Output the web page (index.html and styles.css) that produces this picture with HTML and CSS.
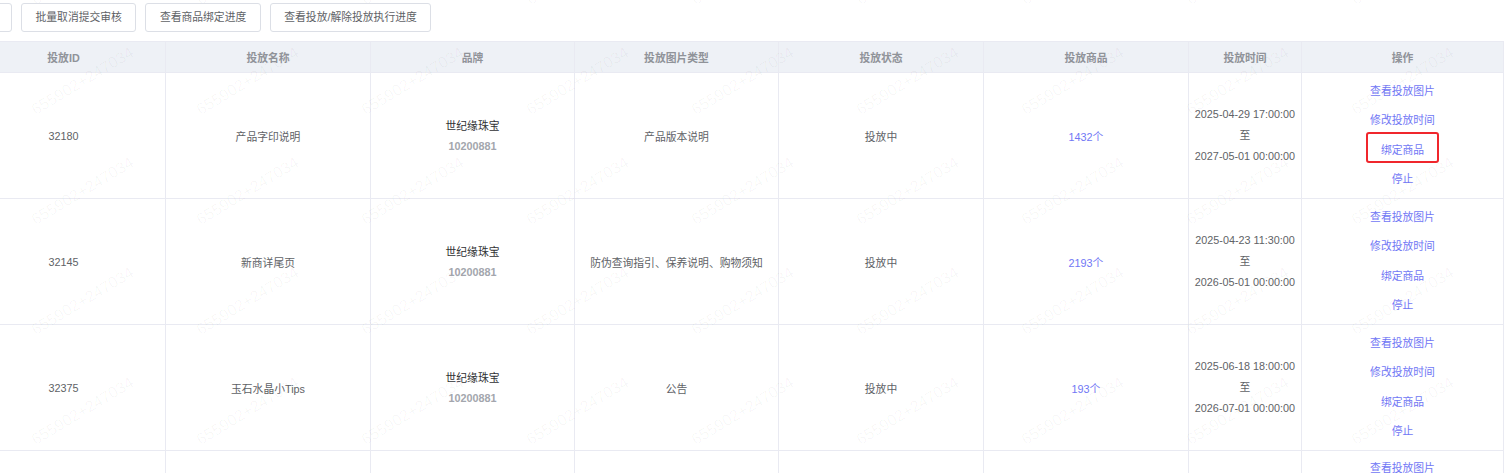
FILE: index.html
```html
<!DOCTYPE html>
<html lang="zh-CN">
<head>
  <meta charset="UTF-8">
  <meta name="viewport" content="width=device-width, initial-scale=1.0">
  <title>投放管理</title>
  <link rel="stylesheet" href="styles.css">
</head>
<body>
  <div class="page">
    <div class="toolbar">
      <button class="btn btn-cut" aria-label="批量提交审核"></button>
      <button class="btn">批量取消提交审核</button>
      <button class="btn">查看商品绑定进度</button>
      <button class="btn">查看投放/解除投放执行进度</button>
    </div>

    <table class="grid">
      <colgroup>
        <col class="col-md">
        <col class="col-lg">
        <col class="col-md">
        <col class="col-md">
        <col class="col-lg">
        <col class="col-lg">
        <col class="col-sm">
        <col class="col-ops">
      </colgroup>
      <thead>
        <tr>
          <th>投放ID</th>
          <th>投放名称</th>
          <th>品牌</th>
          <th>投放图片类型</th>
          <th>投放状态</th>
          <th>投放商品</th>
          <th>投放时间</th>
          <th>操作</th>
        </tr>
      </thead>
      <tbody>
        <tr>
          <td>32180</td>
          <td>产品字印说明</td>
          <td>
            <div class="brand-name">世纪缘珠宝</div>
            <div class="brand-code">10200881</div>
          </td>
          <td>产品版本说明</td>
          <td>投放中</td>
          <td><a class="link" href="#">1432个</a></td>
          <td class="period">
            <div>2025-04-29 17:00:00</div>
            <div>至</div>
            <div>2027-05-01 00:00:00</div>
          </td>
          <td class="ops">
            <a class="op" href="#">查看投放图片</a>
            <a class="op" href="#">修改投放时间</a>
            <a class="op" href="#"><span class="marked">绑定商品</span></a>
            <a class="op" href="#">停止</a>
          </td>
        </tr>
        <tr>
          <td>32145</td>
          <td>新商详尾页</td>
          <td>
            <div class="brand-name">世纪缘珠宝</div>
            <div class="brand-code">10200881</div>
          </td>
          <td>防伪查询指引、保养说明、购物须知</td>
          <td>投放中</td>
          <td><a class="link" href="#">2193个</a></td>
          <td class="period">
            <div>2025-04-23 11:30:00</div>
            <div>至</div>
            <div>2026-05-01 00:00:00</div>
          </td>
          <td class="ops">
            <a class="op" href="#">查看投放图片</a>
            <a class="op" href="#">修改投放时间</a>
            <a class="op" href="#">绑定商品</a>
            <a class="op" href="#">停止</a>
          </td>
        </tr>
        <tr>
          <td>32375</td>
          <td>玉石水晶小Tips</td>
          <td>
            <div class="brand-name">世纪缘珠宝</div>
            <div class="brand-code">10200881</div>
          </td>
          <td>公告</td>
          <td>投放中</td>
          <td><a class="link" href="#">193个</a></td>
          <td class="period">
            <div>2025-06-18 18:00:00</div>
            <div>至</div>
            <div>2026-07-01 00:00:00</div>
          </td>
          <td class="ops">
            <a class="op" href="#">查看投放图片</a>
            <a class="op" href="#">修改投放时间</a>
            <a class="op" href="#">绑定商品</a>
            <a class="op" href="#">停止</a>
          </td>
        </tr>
        <tr class="row-peek">
          <td></td>
          <td></td>
          <td></td>
          <td></td>
          <td></td>
          <td></td>
          <td></td>
          <td class="ops">
            <a class="op" href="#">查看投放图片</a>
          </td>
        </tr>
      </tbody>
    </table>

    <div class="watermark" id="watermark"></div>
  </div>

  <script>
    // tile the account watermark over the whole page
    const mark = document.getElementById('watermark');
    for (let i = 0; i < 54; i++) {
      const s = document.createElement('span');
      s.textContent = '655902+247034';
      mark.appendChild(s);
    }
  </script>
</body>
</html>
```

FILE: styles.css
```css
body {
  margin: 0;
  overflow: hidden;
  background: #fff;
  color: #606266;
  font-family: "Liberation Sans", "Noto Sans CJK SC", sans-serif;
  font-size: 10.8px;
}
.page {
  position: relative;
  height: 473px;
  overflow: hidden;
}

.toolbar {
  display: flex;
  gap: 9px;
  padding-top: 3px;
  margin-left: -82px;
  margin-bottom: 9px;
}
.btn {
  height: 29px;
  padding: 0 13.5px;
  border: 1px solid #dcdfe6;
  border-radius: 3px;
  background: #fff;
  color: #606266;
  font-family: inherit;
  font-size: inherit;
  line-height: 27px;
  white-space: nowrap;
  cursor: pointer;
}
.btn-cut {
  width: 94px;
}

.grid {
  table-layout: fixed;
  width: 1542px;
  margin-left: -39px;
  border-collapse: collapse;
}
.col-md { width: 204px; }
.col-lg { width: 205px; }
.col-sm { width: 113px; }
.col-ops { width: 202px; }

.grid th,
.grid td {
  border: 1px solid #e9eaf2;
  padding: 0;
  text-align: center;
  vertical-align: middle;
}
.grid th {
  height: 30px;
  background: #eef1f6;
  color: #909399;
  font-weight: bold;
}
.grid td {
  height: 125px;
}
.grid .row-peek td {
  vertical-align: top;
}
.row-peek .ops {
  padding-top: 3px;
}

.brand-name {
  color: #303133;
  line-height: 20px;
}
.brand-code {
  color: #a3a6ad;
  font-weight: bold;
  line-height: 20px;
}
.period {
  line-height: 21px;
}

.link,
.op {
  color: #7177f5;
  text-decoration: none;
}
.op {
  display: block;
  line-height: 29.3px;
}
.ops {
  padding-bottom: 2px;
}
.marked {
  position: relative;
}
.marked::after {
  content: "";
  position: absolute;
  left: -15px;
  right: -15px;
  top: -12px;
  bottom: -7px;
  border: 2px solid #f0262c;
  border-radius: 3px;
}

.watermark {
  position: absolute;
  top: -102px;
  left: 37px;
  display: grid;
  grid-template-columns: repeat(9, 165px);
  grid-auto-rows: 110px;
  pointer-events: none;
}
.watermark span {
  align-self: end;
  justify-self: start;
  transform-origin: 0 100%;
  transform: rotate(-31deg);
  font-family: "Liberation Sans", sans-serif;
  font-size: 16px;
  line-height: 16px;
  color: rgba(0, 0, 0, 0.035);
  white-space: nowrap;
}
```
